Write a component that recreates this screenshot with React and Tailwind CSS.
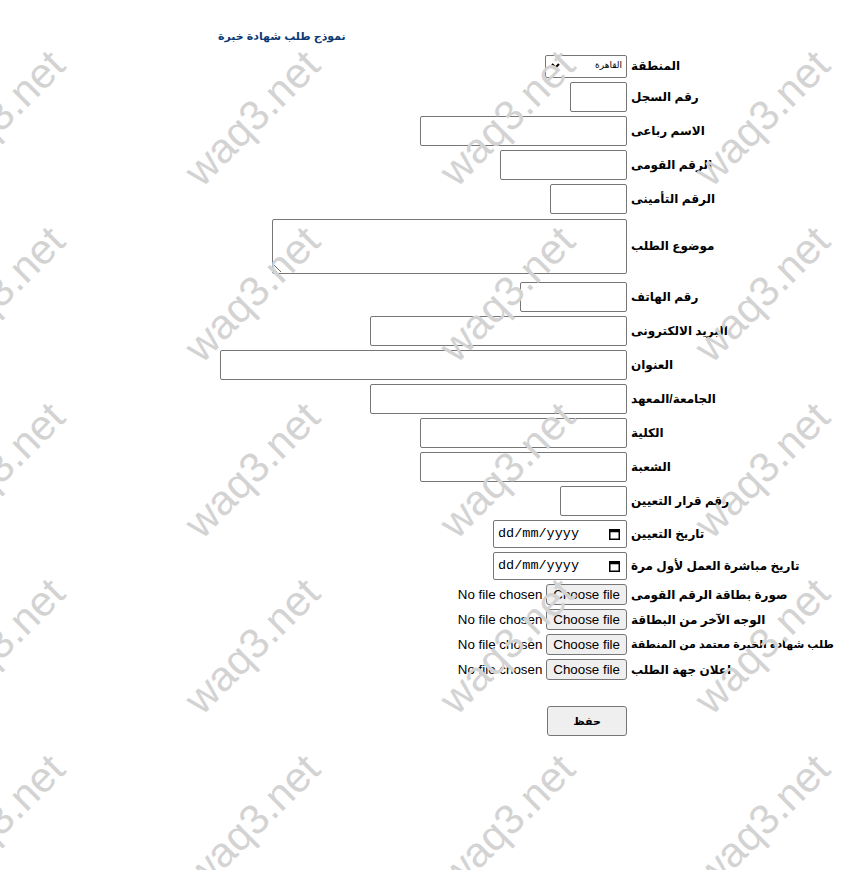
import React from "react";

const font = "font-['Liberation_Sans','DejaVu_Sans',sans-serif]";

const Field = ({ w }) => (
	<div className={`h-[30px] border border-[#767676] rounded-[2px] bg-transparent ${w}`} />
);

const Row = ({ label, h = "h-[34px]", size = "text-[12px]", extra = "", children }) => (
	<div className={`flex items-center ${h} ${extra}`}>
		<div className="w-[409px] shrink-0 flex justify-end">{children}</div>
		<div className={`pl-[4px] font-bold text-black whitespace-nowrap ${size}`} dir="rtl">
			{label}
		</div>
	</div>
);

const DateBox = () => (
	<div className="w-[134px] h-[28px] border border-[#767676] rounded-[2px] flex items-center justify-between pl-[4px] pr-[6px]">
		<span className="font-['Liberation_Mono',monospace] text-[13.5px] text-black">dd/mm/yyyy</span>
		<svg width="11" height="11" viewBox="0 0 11 11">
			<rect x="0.75" y="0.75" width="9.5" height="9.5" fill="none" stroke="#000" strokeWidth="1.5" />
			<rect x="0.75" y="0.75" width="9.5" height="2.5" fill="#000" />
		</svg>
	</div>
);

const FileBox = () => (
	<div className="flex items-center gap-[4px] text-[13.33px] font-['Liberation_Sans',sans-serif] text-black">
		<span>No file chosen</span>
		<button className="h-[21px] px-[6px] bg-[#efefef] border border-[#767676] rounded-[3px] leading-none">
			Choose file
		</button>
	</div>
);

const Watermark = () => {
	const marks = [];
	for (let j = 0; j < 5; j++) {
		for (let i = 0; i < 4; i++) {
			marks.push({ x: -3 + 255 * i, y: 118 + 176 * j });
		}
	}
	return (
		<div className="absolute inset-0 overflow-hidden pointer-events-none">
			{marks.map((m, k) => (
				<span
					key={k}
					className="absolute -translate-x-1/2 -translate-y-1/2 -rotate-45 text-[42px] leading-none text-[#d3d3d3] font-['Liberation_Sans',sans-serif] whitespace-nowrap"
					style={{ left: m.x, top: m.y }}
				>
					waq3.net
				</span>
			))}
		</div>
	);
};

export default function App() {
	return (
		<div className={`relative w-[848px] h-[870px] bg-white overflow-hidden ${font}`}>
			<div className="pl-[218px] pt-[28px]">
				<div className="h-[24px] text-[11px] font-bold text-[#0b3a75]">
					<span dir="rtl" className="inline-block">نموذج طلب شهادة خبرة</span>
				</div>
				<Row label="المنطقة" h="h-[28px]">
					<div className="w-[82px] h-[23px] border border-[#767676] rounded-[2px] flex items-center justify-between pl-[5px] pr-[4px]">
						<svg width="9" height="6" viewBox="0 0 9 6">
							<path d="M1 1 L4.5 4.5 L8 1" fill="none" stroke="#000" strokeWidth="2" />
						</svg>
						<span className="text-[9px] text-black">القاهرة</span>
					</div>
				</Row>
				<Row label="رقم السجل"><Field w="w-[57px]" /></Row>
				<Row label="الاسم رباعى"><Field w="w-[207px]" /></Row>
				<Row label="الرقم القومى"><Field w="w-[127px]" /></Row>
				<Row label="الرقم التأمينى"><Field w="w-[77px]" /></Row>
				<Row label="موضوع الطلب" h="h-[60px]" extra="mb-[4px]">
					<textarea
						dir="rtl"
						className="w-[355px] h-[55px] border border-[#767676] rounded-[2px] bg-transparent"
					/>
				</Row>
				<Row label="رقم الهاتف"><Field w="w-[107px]" /></Row>
				<Row label="البريد الالكترونى"><Field w="w-[257px]" /></Row>
				<Row label="العنوان"><Field w="w-[407px]" /></Row>
				<Row label="الجامعة/المعهد"><Field w="w-[257px]" /></Row>
				<Row label="الكلية"><Field w="w-[207px]" /></Row>
				<Row label="الشعبة"><Field w="w-[207px]" /></Row>
				<Row label="رقم قرار التعيين"><Field w="w-[67px]" /></Row>
				<Row label="تاريخ التعيين" h="h-[32px]"><DateBox /></Row>
				<Row label="تاريخ مباشرة العمل لأول مرة" h="h-[32px]"><DateBox /></Row>
				<Row label="صورة بطاقة الرقم القومى" h="h-[25px]"><FileBox /></Row>
				<Row label="الوجه الآخر من البطاقة" h="h-[25px]"><FileBox /></Row>
				<Row label="طلب شهادة الخبرة معتمد من المنطقة" h="h-[25px]" size="text-[11px]"><FileBox /></Row>
				<Row label="اعلان جهة الطلب" h="h-[25px]"><FileBox /></Row>
				<div className="w-[409px] flex justify-end mt-[24px]">
					<button className="w-[80px] h-[30px] bg-[#efefef] border border-[#767676] rounded-[3px] text-[11px] font-bold text-black">
						حفظ
					</button>
				</div>
			</div>
			<Watermark />
		</div>
	);
}
